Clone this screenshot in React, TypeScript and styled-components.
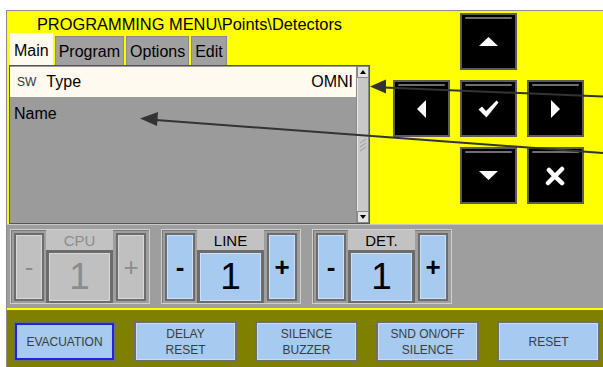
import styled, { createGlobalStyle } from "styled-components";

const GlobalStyle = createGlobalStyle`
  html, body { margin: 0; padding: 0; background: #fff; }
  body { font-family: "Liberation Sans", Arial, sans-serif; color: #000; }
`;

const Screen = styled.div`
  position: relative;
  width: 603px;
  height: 367px;
  padding: 10px 0 0 6px;
  box-sizing: border-box;
  overflow: hidden;
`;

const Frame = styled.div`
  display: flex;
  flex-direction: column;
  height: 100%;
  border-top: 1px solid #8c8c8c;
  border-left: 1px solid #8c8c8c;
`;

const TopPanel = styled.div`
  display: flex;
  height: 213px;
  background: #ffff00;
`;

const LeftCol = styled.div`
  width: 363px;
  padding-left: 2px;
  box-sizing: border-box;
  display: flex;
  flex-direction: column;
`;

const Title = styled.div`
  height: 22px;
  line-height: 27px;
  text-align: center;
  font-size: 16.4px;
  white-space: nowrap;
`;

const TabRow = styled.div`
  display: flex;
  align-items: flex-end;
  gap: 2px;
  height: 32px;
  padding-left: 1px;
`;

const Tab = styled.div<{ $active?: boolean }>`
  height: ${(p) => (p.$active ? 32 : 29)}px;
  padding: 0 3px;
  box-sizing: border-box;
  font-size: 16px;
  line-height: ${(p) => (p.$active ? 33 : 29)}px;
  background: ${(p) => (p.$active ? "#fffaf0" : "#a0a0a0")};
  border: 1px solid ${(p) => (p.$active ? "#fffaf0" : "#8a8a8a")};
  border-bottom: none;
`;

const ListBox = styled.div`
  flex: 1;
  display: flex;
  border: 1px solid #555;
  background: #9b9b9b;
`;

const ListBody = styled.div`
  flex: 1;
  display: flex;
  flex-direction: column;
`;

const HeaderRow = styled.div`
  height: 30px;
  margin-top: 1px;
  display: flex;
  align-items: center;
  padding: 0 3px 0 7px;
  background: #fffaf0;
  font-size: 16px;
`;

const SwTag = styled.span`
  font-size: 12px;
  color: #333;
  margin-right: 10px;
`;

const Spacer = styled.span`
  flex: 1;
`;

const NameRow = styled.div`
  padding: 8px 0 0 4px;
  font-size: 16px;
`;

const ScrollBar = styled.div`
  width: 12px;
  display: flex;
  flex-direction: column;
  background: #c4c4c4;
  border-left: 1px solid #8a8a8a;
`;

const ScrollArrow = styled.div`
  height: 12px;
  display: flex;
  align-items: center;
  justify-content: center;
  background: #e4e4e4;
  border: 1px solid #8a8a8a;
  box-sizing: border-box;
`;

const ScrollThumb = styled.div`
  flex: 1;
  display: flex;
  align-items: center;
  justify-content: center;
  background: #c8c8c8;
  border-left: 1px solid #e8e8e8;
  border-right: 1px solid #8a8a8a;
`;

const NavGrid = styled.div`
  display: grid;
  grid-template-columns: repeat(3, 57px);
  grid-auto-rows: 57px;
  gap: 10px;
  margin: 2px 0 0 23px;
`;

const NavButton = styled.div<{ $col: number; $row: number }>`
  position: relative;
  grid-column: ${(p) => p.$col};
  grid-row: ${(p) => p.$row};
  background: #000;
  border: 2px solid #5c5c5c;
  display: flex;
  align-items: center;
  justify-content: center;

  &::before {
    content: "";
    position: absolute;
    top: 2px;
    left: 3px;
    right: 3px;
    height: 2px;
    border-radius: 1px;
    background: #6e6e6e;
  }
`;

const ControlStrip = styled.div`
  height: 84px;
  display: flex;
  gap: 11px;
  padding: 4px 0 0 3px;
  box-sizing: border-box;
  background: #9e9e9e;
  border-top: 1px solid #c8c8c8;
`;

const Group = styled.div`
  width: 140px;
  height: 75px;
  box-sizing: border-box;
  display: flex;
  padding: 0 3px;
  border: 1px solid #d0d0d0;
  box-shadow: inset 1px 1px 0 #7a7a7a;
`;

const StepButton = styled.div<{ $disabled?: boolean }>`
  width: 30px;
  height: 68px;
  margin: 3px 0 2px;
  box-sizing: border-box;
  display: flex;
  align-items: center;
  justify-content: center;
  font-size: 26px;
  font-weight: ${(p) => (p.$disabled ? "normal" : "bold")};
  color: ${(p) => (p.$disabled ? "#8c8c8c" : "#000")};
  background: ${(p) => (p.$disabled ? "#c0c0c0" : "#a6caf0")};
  border: 2px solid #6c6c6c;
  box-shadow: inset 0 0 0 1px ${(p) => (p.$disabled ? "#d8d8d8" : "#cfe0f5")};
`;

const CenterCol = styled.div`
  width: 67px;
  margin: 0 3px 0 2px;
  display: flex;
  flex-direction: column;
  background: #6c6c6c;
`;

const GroupLabel = styled.div<{ $disabled?: boolean }>`
  height: 20px;
  line-height: 21px;
  text-align: center;
  font-size: 15px;
  background: #c2c2c2;
  color: ${(p) => (p.$disabled ? "#8c8c8c" : "#000")};
`;

const ValueBox = styled.div<{ $disabled?: boolean }>`
  flex: 1;
  margin: 3px 3px 2px;
  display: flex;
  align-items: center;
  justify-content: center;
  font-size: 37px;
  color: ${(p) => (p.$disabled ? "#8c8c8c" : "#000")};
  background: ${(p) => (p.$disabled ? "#c0c0c0" : "#a6caf0")};
  box-shadow: inset 0 0 0 1px ${(p) => (p.$disabled ? "#d8d8d8" : "#cfe0f5")};
`;

const Divider = styled.div`
  height: 2px;
  background: #ffff00;
`;

const BottomBar = styled.div`
  flex: 1;
  display: flex;
  gap: 18px;
  padding: 11px 0 0 6px;
  background: #808000;
`;

const ActionButton = styled.div<{ $selected?: boolean }>`
  width: 103px;
  height: 41px;
  box-sizing: border-box;
  display: flex;
  align-items: center;
  justify-content: center;
  text-align: center;
  font-size: 12px;
  line-height: 16px;
  color: #3c3c3c;
  background: #a6caf0;
  border: 2px solid #6e6e6e;
  box-shadow: inset 0 0 0 ${(p) => (p.$selected ? "2px #2222dd" : "1px #d0dcea")};
`;

const Annotations = styled.svg`
  position: absolute;
  top: 0;
  left: 0;
  pointer-events: none;
`;

const steppers = [
  { label: "CPU", disabled: true },
  { label: "LINE", disabled: false },
  { label: "DET.", disabled: false },
];

const actions = [
  { text: ["EVACUATION"], selected: true },
  { text: ["DELAY", "RESET"] },
  { text: ["SILENCE", "BUZZER"] },
  { text: ["SND ON/OFF", "SILENCE"] },
  { text: ["RESET"] },
];

export default function App() {
  return (
    <Screen>
      <GlobalStyle />
      <Frame>
        <TopPanel>
          <LeftCol>
            <Title>PROGRAMMING MENU\Points\Detectors</Title>
            <TabRow>
              <Tab $active>Main</Tab>
              <Tab>Program</Tab>
              <Tab>Options</Tab>
              <Tab>Edit</Tab>
            </TabRow>
            <ListBox>
              <ListBody>
                <HeaderRow>
                  <SwTag>SW</SwTag>
                  <span>Type</span>
                  <Spacer />
                  <span>OMNI</span>
                </HeaderRow>
                <NameRow>Name</NameRow>
              </ListBody>
              <ScrollBar>
                <ScrollArrow>
                  <svg width="6" height="4"><polygon points="0,4 3,0 6,4" fill="#000" /></svg>
                </ScrollArrow>
                <ScrollThumb>
                  <svg width="8" height="14">
                    <path d="M1 5 L7 1 M1 9 L7 5 M1 13 L7 9" stroke="#9a9a9a" strokeWidth="1" />
                  </svg>
                </ScrollThumb>
                <ScrollArrow>
                  <svg width="6" height="4"><polygon points="0,0 6,0 3,4" fill="#000" /></svg>
                </ScrollArrow>
              </ScrollBar>
            </ListBox>
          </LeftCol>
          <NavGrid>
            <NavButton $col={2} $row={1}>
              <svg width="19" height="9"><polygon points="0,9 9.5,0 19,9" fill="#fff" /></svg>
            </NavButton>
            <NavButton $col={1} $row={2}>
              <svg width="9" height="18"><polygon points="9,0 0,9 9,18" fill="#fff" /></svg>
            </NavButton>
            <NavButton $col={2} $row={2}>
              <svg width="21" height="18">
                <path d="M0.5 9.5 L4 6.5 L8 11 L18.5 0.5 L20.5 2.5 L8.5 17.5 Z" fill="#fff" />
              </svg>
            </NavButton>
            <NavButton $col={3} $row={2}>
              <svg width="9" height="18"><polygon points="0,0 9,9 0,18" fill="#fff" /></svg>
            </NavButton>
            <NavButton $col={2} $row={3}>
              <svg width="19" height="9"><polygon points="0,0 19,0 9.5,9" fill="#fff" /></svg>
            </NavButton>
            <NavButton $col={3} $row={3}>
              <svg width="21" height="20">
                <path d="M4 4 Q10 11 17 17 M17 3 Q10 10 3 17" stroke="#fff" strokeWidth="4.5" strokeLinecap="round" fill="none" />
              </svg>
            </NavButton>
          </NavGrid>
        </TopPanel>
        <ControlStrip>
          {steppers.map((s) => (
            <Group key={s.label}>
              <StepButton $disabled={s.disabled}>-</StepButton>
              <CenterCol>
                <GroupLabel $disabled={s.disabled}>{s.label}</GroupLabel>
                <ValueBox $disabled={s.disabled}>1</ValueBox>
              </CenterCol>
              <StepButton $disabled={s.disabled}>+</StepButton>
            </Group>
          ))}
        </ControlStrip>
        <Divider />
        <BottomBar>
          {actions.map((a) => (
            <ActionButton key={a.text.join(" ")} $selected={a.selected}>
              <div>
                {a.text.map((t) => (
                  <div key={t}>{t}</div>
                ))}
              </div>
            </ActionButton>
          ))}
        </BottomBar>
      </Frame>
      <Annotations width="603" height="367">
        <line x1="384" y1="87.5" x2="603" y2="96.5" stroke="#333" strokeWidth="2" />
        <polygon points="370,86.5 386,79.5 386,93.5" fill="#333" />
        <line x1="156" y1="120" x2="603" y2="153" stroke="#333" strokeWidth="2" />
        <polygon points="140,118.5 158,112 157,126" fill="#333" />
      </Annotations>
    </Screen>
  );
}
